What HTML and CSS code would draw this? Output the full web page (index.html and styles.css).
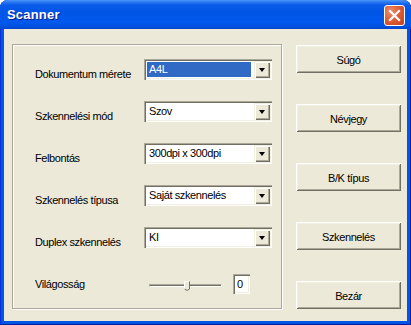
FILE: index.html
```html
<!DOCTYPE html>
<html lang="hu">
<head>
    <meta charset="UTF-8">
    <title>Scanner</title>
    <link rel="stylesheet" href="styles.css">
</head>
<body>
    <div class="window">
        <div class="titlebar">
            <span class="title">Scanner</span>
            <div class="close-btn">
                <svg width="21" height="21" viewBox="0 0 21 21">
                    <path d="M6 6 L15 15 M15 6 L6 15" stroke="#fff" stroke-width="2.2" stroke-linecap="square"/>
                </svg>
            </div>
        </div>
        <div class="client">
            <div class="group">
                <div class="row">
                    <label>Dokumentum mérete</label>
                    <div class="combo"><span class="value selected">A4L</span><span class="drop"></span></div>
                </div>
                <div class="row">
                    <label>Szkennelési mód</label>
                    <div class="combo"><span class="value">Szov</span><span class="drop"></span></div>
                </div>
                <div class="row">
                    <label>Felbontás</label>
                    <div class="combo"><span class="value">300dpi x 300dpi</span><span class="drop"></span></div>
                </div>
                <div class="row">
                    <label>Szkennelés típusa</label>
                    <div class="combo"><span class="value">Saját szkennelés</span><span class="drop"></span></div>
                </div>
                <div class="row">
                    <label>Duplex szkennelés</label>
                    <div class="combo"><span class="value">KI</span><span class="drop"></span></div>
                </div>
                <div class="row slider-row">
                    <label>Világosság</label>
                    <div class="slider">
                        <div class="track"></div>
                        <svg class="thumb" width="6" height="10" viewBox="0 0 6 10">
                            <path d="M0.5 0.5 H5.5 V8 L3 9.5 L0.5 8 Z" fill="#ECE9D8"/>
                            <path d="M0.5 8.5 V0.5 H5" stroke="#fff" fill="none"/>
                            <path d="M5.5 0.5 V8 L3 9.5 L0.5 8" stroke="#716F64" fill="none"/>
                        </svg>
                    </div>
                    <div class="edit">0</div>
                </div>
            </div>
            <div class="buttons">
                <div class="btn">Súgó</div>
                <div class="btn">Névjegy</div>
                <div class="btn">B/K típus</div>
                <div class="btn">Szkennelés</div>
                <div class="btn">Bezár</div>
            </div>
        </div>
    </div>
</body>
</html>
```

FILE: styles.css
```css
body {
    margin: 0;
    background: #fff;
    font-family: 'Liberation Sans', Arial, sans-serif;
    font-size: 11px;
    letter-spacing: -0.4px;
    color: #000;
}
.window {
    width: 411px;
    height: 325px;
    display: flex;
    flex-direction: column;
    background: #0055E5;
    border-radius: 8px 8px 0 0;
    overflow: hidden;
    box-shadow: inset 1px 0 #0831D9, inset -1px 0 #001EA0, inset 0 -1px #001EA0;
}
.titlebar {
    flex: none;
    height: 29px;
    display: flex;
    align-items: center;
    justify-content: space-between;
    padding: 0 6px 0 7px;
    background: linear-gradient(#4A97F8 0px, #2D78F2 2px, #0B5BE9 5px, #0055E5 12px, #0058EE 22px, #0050DC 27px, #0046C8 29px);
}
.title {
    color: #fff;
    font-weight: bold;
    font-size: 13px;
    letter-spacing: 0.2px;
    text-shadow: 1px 1px #0A1883;
    margin-top: -1px;
}
.close-btn {
    width: 21px;
    height: 21px;
    box-sizing: border-box;
    border: 1px solid #fff;
    border-radius: 3px;
    background: radial-gradient(circle at 30% 30%, #EC8E6E 0%, #DC5A35 50%, #C3421C 100%);
    display: flex;
    align-items: center;
    justify-content: center;
    margin-top: 1px;
}
.close-btn svg {
    margin: -1px;
}
.client {
    flex: 1;
    margin: 0 4px 4px;
    background: #ECE9D8;
    display: flex;
    align-items: flex-start;
}
.group {
    width: 270px;
    height: 265px;
    box-sizing: border-box;
    margin: 15px 0 0 8px;
    border: 1px solid #ACA899;
    box-shadow: inset 1px 1px #fff, 1px 1px #fff;
    padding: 14px 0 0 22px;
    display: flex;
    flex-direction: column;
    gap: 21px;
}
.row {
    display: flex;
    height: 21px;
}
.row label {
    width: 109px;
    line-height: 13px;
    padding-top: 9px;
    white-space: nowrap;
}
.combo {
    width: 128px;
    height: 21px;
    box-sizing: border-box;
    display: flex;
    padding: 2px;
    background: #fff;
    box-shadow: inset 1px 1px #ACA899, inset 2px 2px #716F64, inset -1px -1px #fff, inset -2px -2px #F1EFE2;
}
.value {
    flex: 1;
    height: 15px;
    line-height: 15px;
    margin: 1px 3px 1px 1px;
    padding-left: 2px;
    white-space: nowrap;
    overflow: hidden;
}
.value.selected {
    background: #316AC5;
    color: #fff;
}
.drop {
    width: 16px;
    height: 17px;
    box-sizing: border-box;
    background: #ECE9D8;
    box-shadow: inset 1px 1px #F1EFE2, inset 2px 2px #fff, inset -1px -1px #716F64, inset -2px -2px #ACA899;
    display: flex;
    align-items: center;
    justify-content: center;
}
.drop::after {
    content: "";
    border-left: 3.5px solid transparent;
    border-right: 3.5px solid transparent;
    border-top: 4px solid #000;
    margin-top: 1px;
}
.slider-row {
    height: 20px;
    margin-top: 5px;
    align-items: center;
}
.slider-row label {
    padding-top: 0;
    line-height: 20px;
}
.slider {
    position: relative;
    width: 73px;
    height: 20px;
    margin-left: 5px;
    display: flex;
    align-items: center;
}
.track {
    width: 100%;
    height: 3px;
    box-sizing: border-box;
    border-top: 1px solid #ACA899;
    border-left: 1px solid #ACA899;
    border-bottom: 1px solid #fff;
    border-right: 1px solid #fff;
    box-shadow: inset 0 1px #716F64;
    margin-top: 2px;
}
.thumb {
    position: absolute;
    left: 35px;
    top: 7px;
}
.edit {
    width: 17px;
    height: 20px;
    box-sizing: border-box;
    margin-left: 11px;
    padding: 2px 0 2px 4px;
    line-height: 16px;
    background: #fff;
    box-shadow: inset 1px 1px #ACA899, inset 2px 2px #716F64, inset -1px -1px #fff, inset -2px -2px #F1EFE2;
}
.buttons {
    display: flex;
    flex-direction: column;
    gap: 31px;
    margin: 16px 0 0 14px;
}
.btn {
    width: 105px;
    height: 28px;
    box-sizing: border-box;
    display: flex;
    align-items: center;
    justify-content: center;
    padding-top: 1px;
    background: #ECE9D8;
    box-shadow: inset 1px 1px #fff, inset -1px -1px #716F64, inset 2px 2px #F1EFE2, inset -2px -2px #ACA899;
}
```
